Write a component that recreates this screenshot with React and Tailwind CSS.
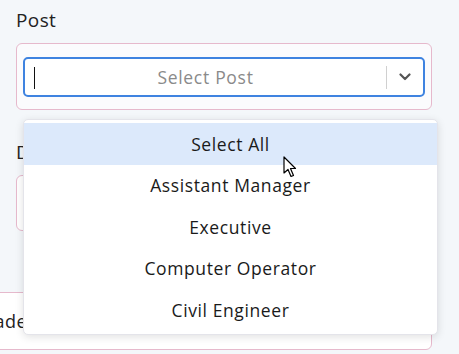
import React from "react";

const font = { fontFamily: '"Open Sans", "Noto Sans", sans-serif' };

export default function App() {
  const items = ["Select All", "Assistant Manager", "Executive", "Computer Operator", "Civil Engineer"];
  return (
    <div className="relative w-[459px] h-[354px] overflow-hidden bg-[#f4f7fa] text-[#1f1f1f]" style={font}>
      <div className="pl-[16px] pt-[7px] w-[432px]">
        <div className="text-[19px] leading-[26px] tracking-[0.4px] text-[#222]">Post</div>
        <div className="mt-[10px] h-[67px] rounded-[6px] border border-[#e6b9cc] bg-[#fbfbfd] px-[6px] pt-[13px]">
          <div className="flex h-[40px] items-center rounded-[5px] border-2 border-[#3f83e0] bg-white">
            <div className="relative flex h-full flex-1 items-center justify-center">
              <span className="absolute left-[9px] top-[8px] h-[22px] w-px bg-[#111]" />
              <span className="text-[17.5px] tracking-[0.7px] text-[#8a8a8a]">Select Post</span>
            </div>
            <span className="h-[23px] w-px bg-[#d0d0d0]" />
            <div className="flex w-[36px] items-center justify-center">
              <svg width="12" height="8" viewBox="0 0 12 8">
                <path d="M1.5 1.5 L6 6 L10.5 1.5" fill="none" stroke="#555" strokeWidth="2.2" strokeLinecap="round" strokeLinejoin="round" />
              </svg>
            </div>
          </div>
        </div>
        <div className="mt-[29px] text-[19px] leading-[26px] tracking-[0.4px] text-[#222]">Department</div>
        <div className="mt-[10px] h-[56px] rounded-[6px] border border-[#e6b9cc] bg-white" />
      </div>
      <div className="mt-[61px] ml-[-40px] flex h-[58px] w-[472px] items-center rounded-[6px] border border-[#e6b9cc] bg-white pl-[12px]">
        <span className="text-[18px] tracking-[0.5px] text-[#222]">Grade</span>
      </div>

      <div className="absolute left-[23px] top-[119px] w-[415px] rounded-[5px] border border-[#e4e4ea] bg-white py-[3px] shadow-[0_2px_8px_rgba(0,0,0,0.12)]">
        {items.map((t, i) => (
          <div
            key={t}
            className={`flex h-[41.5px] items-center justify-center text-[17.5px] tracking-[0.6px] text-[#1a1a1a] ${i === 0 ? "bg-[#dce9fb]" : ""}`}
          >
            {t}
          </div>
        ))}
      </div>

      <svg className="absolute left-[283px] top-[156px]" width="16" height="23" viewBox="0 0 16 23">
        <path d="M1 1 L1 17 L5 13.5 L8 20.5 L10.5 19.5 L7.5 12.5 L12.5 12.5 Z" fill="#fff" stroke="#000" strokeWidth="1.2" strokeLinejoin="round" />
      </svg>
    </div>
  );
}
